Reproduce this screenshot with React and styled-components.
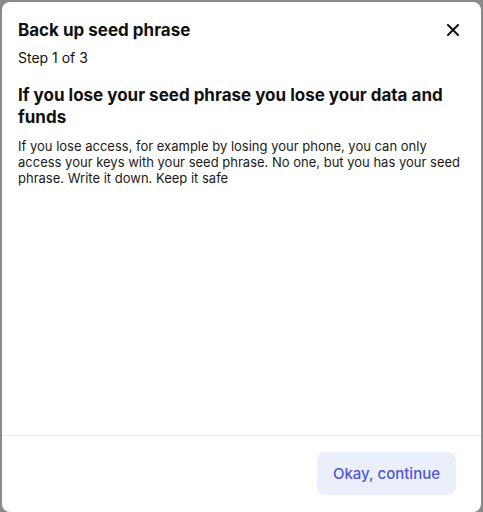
import React from "react";
import styled, { createGlobalStyle } from "styled-components";

const GlobalStyle = createGlobalStyle`
  html, body {
    margin: 0;
    padding: 0;
    background: #8a8a8a;
    font-family: Inter, "Noto Sans", sans-serif;
  }
`;

const Overlay = styled.div`
  width: 483px;
  height: 512px;
  padding: 2px 2px 0 2px;
  box-sizing: border-box;
`;

const Modal = styled.div`
  height: 510px;
  background: #fff;
  border-radius: 8px;
  display: flex;
  flex-direction: column;
  overflow: hidden;
`;

const Content = styled.div`
  flex: 1;
  padding: 16px 18px 0 16px;
`;

const Header = styled.div`
  display: flex;
  align-items: center;
  justify-content: space-between;
`;

const Title = styled.h2`
  margin: 0;
  font-size: 17px;
  line-height: 24px;
  font-weight: 700;
  color: #111;
`;

const CloseButton = styled.button`
  border: 0;
  background: none;
  padding: 0;
  width: 20px;
  height: 20px;
  display: flex;
  align-items: center;
  justify-content: center;
  cursor: pointer;
  color: #111;
`;

const Step = styled.p`
  margin: 6px 0 0;
  font-size: 14px;
  line-height: 20px;
  color: #111;
`;

const Heading = styled.h3`
  margin: 16px 0 0;
  font-size: 17px;
  line-height: 22px;
  font-weight: 700;
  color: #111;
`;

const Text = styled.p`
  margin: 10px 0 0;
  font-size: 13px;
  line-height: 16px;
  color: #1a1a1a;
`;

const Footer = styled.div`
  border-top: 1px solid #ececec;
  display: flex;
  justify-content: flex-end;
  padding: 16px 25px 17px;
`;

const Button = styled.button`
  border: 0;
  border-radius: 8px;
  background: #ebeefb;
  color: #4d57d4;
  font-family: inherit;
  font-size: 15px;
  font-weight: 500;
  height: 43px;
  padding: 0 16px;
  cursor: pointer;
`;

const App = () => {
  return (
    <>
      <GlobalStyle />
      <Overlay>
        <Modal>
          <Content>
            <Header>
              <Title>Back up seed phrase</Title>
              <CloseButton aria-label="Close">
                <svg width="12" height="12" viewBox="0 0 12 12" fill="none">
                  <path d="M1 1L11 11M11 1L1 11" stroke="currentColor" strokeWidth="2" strokeLinecap="round" />
                </svg>
              </CloseButton>
            </Header>
            <Step>Step 1 of 3</Step>
            <Heading>If you lose your seed phrase you lose your data and funds</Heading>
            <Text>
              If you lose access, for example by losing your phone, you can only access your keys with your seed
              phrase. No one, but you has your seed phrase. Write it down. Keep it safe
            </Text>
          </Content>
          <Footer>
            <Button>Okay, continue</Button>
          </Footer>
        </Modal>
      </Overlay>
    </>
  );
};

export default App;
